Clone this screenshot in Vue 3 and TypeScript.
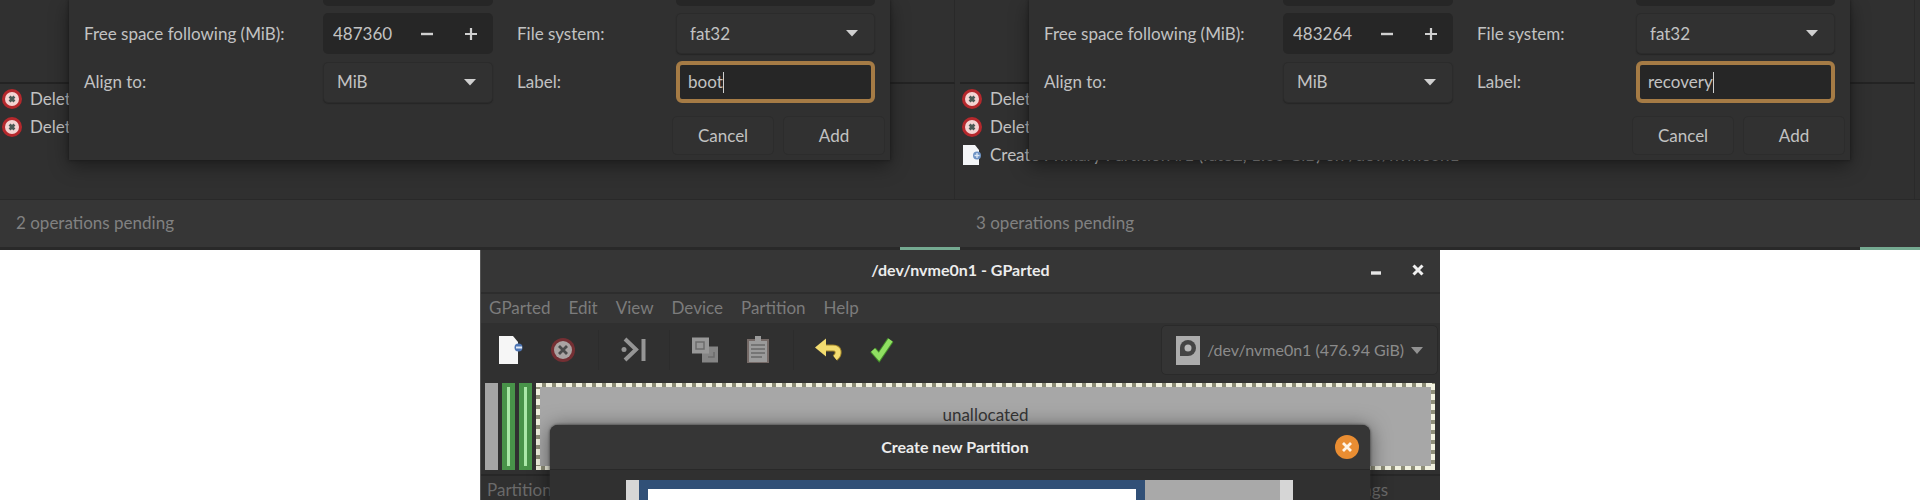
<script setup lang="ts">
interface Operation {
  kind: 'delete' | 'create'
  text: string
}

interface Pane {
  id: string
  free: string
  label: string
  pending: string
  operations: Operation[]
}

const removals: Operation[] = [
  { kind: 'delete', text: 'Delete' },
  { kind: 'delete', text: 'Delete' },
]

const panes: Pane[] = [
  { id: 'boot', free: '487360', label: 'boot', pending: '2 operations pending', operations: removals },
  {
    id: 'recovery',
    free: '483264',
    label: 'recovery',
    pending: '3 operations pending',
    operations: [
      ...removals,
      { kind: 'create', text: 'Create Primary Partition #1 (fat32, 1.00 GiB) on /dev/nvme0n1' },
    ],
  },
]

const menus: string[] = ['GParted', 'Edit', 'View', 'Device', 'Partition', 'Help']
</script>

<template>
  <main class="page">
    <section v-for="pane in panes" :key="pane.id" class="pane">
      <div class="upper"></div>
      <ul class="operations">
        <li v-for="(op, i) in pane.operations" :key="i">
          <svg v-if="op.kind === 'delete'" viewBox="0 0 22 22" width="22" height="22" aria-hidden="true">
            <circle cx="11" cy="11" r="10" fill="#b5282c" />
            <circle cx="11" cy="11" r="7" fill="#f3d4d2" />
            <path d="M8.600 8.600l4.800 4.800m0-4.800l-4.800 4.800" stroke="#4b5a55" stroke-width="2.800" />
          </svg>
          <svg v-else viewBox="0 0 22 22" width="22" height="22" aria-hidden="true">
            <path d="M2 1h12l4 5v15H2z" fill="#f4f6f8" />
            <circle cx="16" cy="11.500" r="4" fill="#6d93c4" />
            <path d="M13.500 11.500h5m-2.500-2.500v5" stroke="#dce8f5" stroke-width="1.300" />
          </svg>
          <span>{{ op.text }}</span>
        </li>
      </ul>
      <footer class="status">{{ pane.pending }}</footer>
      <div class="strip"><i></i></div>

      <form class="dialog options" @submit.prevent>
        <div class="form">
          <i class="cut first"></i>
          <i class="cut second"></i>
          <label :for="pane.id + '-free'">Free space following (MiB):</label>
          <div class="spin">
            <input :id="pane.id + '-free'" type="text" inputmode="numeric" :value="pane.free" />
            <button type="button" aria-label="Decrease">
              <svg viewBox="0 0 14 14" width="14" height="14"><path d="M1 7h12" stroke="#d0d0d0" stroke-width="2.400" /></svg>
            </button>
            <button type="button" aria-label="Increase">
              <svg viewBox="0 0 14 14" width="14" height="14"><path d="M1 7h12M7 1v12" stroke="#d0d0d0" stroke-width="2.200" /></svg>
            </button>
          </div>
          <label :for="pane.id + '-fs'">File system:</label>
          <div class="choice">
            <select :id="pane.id + '-fs'"><option>fat32</option></select>
            <svg viewBox="0 0 14 8" width="12" height="7"><path d="M0 0h14L7 7.500z" fill="#d0d0d0" /></svg>
          </div>
          <label :for="pane.id + '-align'">Align to:</label>
          <div class="choice">
            <select :id="pane.id + '-align'"><option>MiB</option></select>
            <svg viewBox="0 0 14 8" width="12" height="7"><path d="M0 0h14L7 7.500z" fill="#d0d0d0" /></svg>
          </div>
          <label :for="pane.id + '-label'">Label:</label>
          <div class="entry">
            <input :id="pane.id + '-label'" type="text" :value="pane.label" />
            <i class="caret"></i>
          </div>
        </div>
        <div class="actions">
          <button type="button">Cancel</button>
          <button type="submit">Add</button>
        </div>
      </form>
    </section>

    <section class="window">
      <header class="titlebar">
        <h1>/dev/nvme0n1 - GParted</h1>
        <div class="controls">
          <button type="button" aria-label="Minimize">
            <svg viewBox="0 0 12 12" width="12" height="12"><path d="M1 9h10" stroke="#e6e6e6" stroke-width="3.400" /></svg>
          </button>
          <button type="button" aria-label="Close">
            <svg viewBox="0 0 12 12" width="12" height="12"><path d="M1.500 1.500l9 9m0-9l-9 9" stroke="#f0f0f0" stroke-width="3" /></svg>
          </button>
        </div>
      </header>
      <nav class="menubar">
        <button v-for="m in menus" :key="m" type="button">{{ m }}</button>
      </nav>
      <div class="toolbar">
        <button type="button" aria-label="New">
          <svg viewBox="0 0 28 30" width="28" height="30">
            <path d="M3 1h14l5 6v22H3z" fill="#f6f6f6" />
            <circle cx="22.500" cy="12.500" r="4" fill="#4f77b5" />
            <path d="M20 12.500h6" stroke="#e4ecf8" stroke-width="2" />
          </svg>
        </button>
        <button type="button" aria-label="Delete">
          <svg viewBox="0 0 28 30" width="28" height="30">
            <circle cx="14" cy="15" r="12" fill="#742f33" />
            <circle cx="14" cy="15" r="9" fill="#aaa4a3" />
            <path d="M10 11l8 8m0-8l-8 8" stroke="#4b4b4b" stroke-width="2.800" />
          </svg>
        </button>
        <i class="sep"></i>
        <button type="button" aria-label="Resize or move">
          <svg viewBox="0 0 28 30" width="28" height="30">
            <path d="M5 4l11 10.500L5 25" fill="none" stroke="#959595" stroke-width="4" />
            <circle cx="4" cy="14.500" r="2.500" fill="#959595" />
            <path d="M23.500 4v22" stroke="#959595" stroke-width="4" />
          </svg>
        </button>
        <i class="sep"></i>
        <button type="button" aria-label="Copy">
          <svg viewBox="0 0 28 30" width="28" height="30">
            <path d="M11 11.500h16v16H11z" fill="#858585" />
            <path d="M1 2.500h17v16H1z" fill="#989898" />
            <path d="M5 7h8v7H5zM17 22h6v-5" fill="none" stroke="#6c6c6c" stroke-width="1.500" />
          </svg>
        </button>
        <button type="button" aria-label="Paste">
          <svg viewBox="0 0 28 30" width="28" height="30">
            <path d="M3 4h22v24H3z" fill="#756a67" />
            <path d="M5 6h18v21H5zM11 1h6v5h-6z" fill="#9b9b9b" />
            <path d="M7 10h14M7 14h14M7 18h14M7 22h11" stroke="#696969" stroke-width="1.500" />
          </svg>
        </button>
        <i class="sep"></i>
        <button type="button" aria-label="Undo">
          <svg viewBox="0 0 28 30" width="28" height="30">
            <path d="M9 13h9c6 0 7 6 2 10" fill="none" stroke="#a08428" stroke-width="7" />
            <path d="M0 12.500L11 3.500v18z" fill="#f3dc70" />
            <path d="M9 13h9c6 0 7 6 2 10" fill="none" stroke="#f3dc70" stroke-width="5" />
          </svg>
        </button>
        <button type="button" aria-label="Apply">
          <svg viewBox="0 0 28 30" width="28" height="30">
            <path d="M5 15l6 7L22.500 5" fill="none" stroke="#438e29" stroke-width="7" />
            <path d="M5 15l6 7L22.500 5" fill="none" stroke="#90df62" stroke-width="5" />
          </svg>
        </button>
        <button type="button" class="device">
          <svg viewBox="0 0 24 29" width="24" height="29">
            <path d="M0 0h24v29H0z" fill="#acacac" />
            <circle cx="12" cy="12" r="8" fill="#454545" />
            <path d="M4 12h8v8H4z" fill="#454545" />
            <circle cx="12" cy="12" r="3.500" fill="#b8b8b8" />
          </svg>
          <span>/dev/nvme0n1 (476.94 GiB)</span>
          <svg viewBox="0 0 12 7" width="12" height="7"><path d="M0 0h12L6 7z" fill="#929292" /></svg>
        </button>
      </div>
      <div class="disk">
        <i class="used"></i>
        <i class="ext"></i>
        <i class="ext"></i>
        <div class="free">
          <span>unallocated</span>
          <svg class="outline" width="100%" height="100%" aria-hidden="true">
            <rect x="0" y="0" width="100%" height="100%" fill="none" stroke="#8e8e78" stroke-width="8" />
            <rect x="0" y="0" width="100%" height="100%" fill="none" stroke="#f1f1df" stroke-width="8" stroke-dasharray="6 4" />
          </svg>
        </div>
      </div>
      <div class="columns"><span>Partition</span><span>Flags</span></div>

      <div class="dialog create">
        <header>
          <h2>Create new Partition</h2>
          <button type="button" aria-label="Close dialog">
            <svg viewBox="0 0 26 26" width="26" height="26">
              <circle cx="13" cy="13" r="12" fill="#e98d32" />
              <path d="M9 9l8 8m0-8l-8 8" stroke="#fff4e6" stroke-width="2.800" />
            </svg>
          </button>
        </header>
        <div class="resizer">
          <i class="edge"></i>
          <i class="block"></i>
          <i class="rest"></i>
          <i class="edge"></i>
        </div>
      </div>
    </section>
  </main>
</template>

<style>
body {
  margin: 0;
  background: #fff;
}
</style>

<style scoped>
* {
  box-sizing: border-box;
}
.page {
  display: grid;
  grid-template-columns: repeat(4, minmax(0, 1fr));
  grid-template-rows: auto minmax(0, 1fr);
  height: 100vh;
  overflow: hidden;
  font-family: Lato, "Liberation Sans", sans-serif;
  font-size: 17px;
  line-height: 24px;
  color: #c2c2c2;
}
button,
input,
select {
  margin: 0;
  padding: 0;
  border: 0;
  outline: 0;
  background: none;
  color: inherit;
  font: inherit;
}
svg {
  display: block;
  flex: none;
}
.pane {
  position: relative;
  grid-column: span 2;
  overflow: hidden;
  background: #303030;
}
.upper {
  height: 84px;
  margin-right: 5px;
  border-right: 1px solid #292929;
  border-bottom: 2px solid #232323;
}
.operations {
  height: 115px;
  margin: 0 5px 0 0;
  padding: 1px 0 0 1px;
  border-right: 1px solid #2a2a2a;
  list-style: none;
}
.operations li {
  display: flex;
  align-items: center;
  gap: 7px;
  height: 28px;
  white-space: nowrap;
}
.status {
  height: 48px;
  padding: 11px 16px;
  border-top: 1px solid #292929;
  background: #363636;
  color: #818181;
}
.strip {
  display: flex;
  justify-content: flex-end;
  height: 3px;
  background: #292929;
}
.strip i {
  width: 60px;
  background: #75aa91;
}
.dialog {
  position: absolute;
  left: 69px;
  right: 70px;
  background: #303030;
  box-shadow: 0 0 3px #181818, 0 6px 18px rgba(0, 0, 0, 0.4);
}
.options {
  top: 0;
  padding: 0 5px 5px 15px;
}
.form {
  display: grid;
  grid-template-columns: 215px minmax(0, 170fr) 135px minmax(0, 199fr);
  gap: 7px 24px;
  align-items: center;
  padding-right: 10px;
}
.cut {
  height: 6px;
  border-radius: 0 0 5px 5px;
  background: #262626;
}
.first {
  grid-column: 2;
}
.second {
  grid-column: 4;
}
label {
  white-space: nowrap;
}
.spin {
  display: flex;
  height: 41px;
  border-radius: 5px;
  background: #262626;
}
.spin input {
  flex: 1;
  min-width: 0;
  padding-left: 10px;
}
.spin button {
  display: grid;
  place-items: center;
  width: 44px;
}
.choice {
  display: grid;
  align-items: center;
  height: 41px;
  border: 1px solid #2b2b2b;
  border-radius: 5px;
  background: #313131;
  box-shadow: 0 1px 1px #262626;
}
.choice select,
.choice svg {
  grid-area: 1 / 1;
}
.choice select {
  appearance: none;
  height: 100%;
  padding-left: 13px;
}
.choice svg {
  justify-self: end;
  margin-right: 16px;
  pointer-events: none;
}
.entry {
  display: flex;
  align-items: center;
  height: 42px;
  padding-left: 8px;
  border: 4px solid #a57b45;
  border-radius: 6px;
  background: #262626;
}
.entry input {
  field-sizing: content;
}
.caret {
  width: 1px;
  height: 21px;
  background: #d0d0d0;
}
.actions {
  display: flex;
  justify-content: flex-end;
  gap: 9px;
  padding-top: 13px;
}
.actions button {
  width: 102px;
  height: 39px;
  border: 1px solid #2c2c2c;
  border-radius: 5px;
  background: #313131;
}
.window {
  position: relative;
  grid-column: 2 / span 2;
  overflow: hidden;
  border-left: 1px solid #555;
  background: #303030;
}
.titlebar {
  display: grid;
  grid-template-columns: 1fr auto 1fr;
  align-items: center;
  height: 44px;
  padding-bottom: 3px;
  border-bottom: 2px solid #2d2d2d;
  background: #363636;
}
.titlebar h1,
.create h2 {
  grid-column: 2;
  margin: 0;
  color: #ececec;
  font-size: 16px;
  font-weight: 700;
}
.controls {
  display: flex;
  justify-content: flex-end;
  gap: 30px;
  padding-right: 16px;
}
.menubar {
  display: flex;
  gap: 18px;
  height: 29px;
  padding-left: 8px;
  background: #363636;
  color: #7c7c7c;
}
.menubar button {
  height: 28px;
}
.toolbar {
  display: flex;
  align-items: center;
  gap: 25px;
  height: 60px;
  padding: 2px 2px 8px 15px;
}
.sep {
  width: 1px;
  height: 40px;
  margin: 0 -4px;
  background: #2c2c2c;
}
.device {
  display: flex;
  align-items: center;
  gap: 7px;
  height: 50px;
  margin-left: auto;
  padding: 0 14px;
  border: 1px solid #2a2a2a;
  border-radius: 5px;
  background: #343434;
  color: #8b8b8b;
  font-size: 16px;
}
.disk {
  display: flex;
  gap: 4px;
  height: 87px;
  padding: 0 5px 0 4px;
}
.used {
  width: 13px;
  background: #a5a5a5;
}
.ext {
  width: 13px;
  border: solid #489349;
  border-width: 4px 5px;
  background: #aae8a8;
}
.free {
  display: grid;
  flex: 1;
  justify-items: center;
  overflow: hidden;
  background: #a7a7a7;
  color: #363636;
}
.free span,
.outline {
  grid-area: 1 / 1;
}
.free span {
  padding-top: 20px;
}
.columns {
  display: flex;
  justify-content: space-between;
  margin-top: 4px;
  padding: 2px 52px 0 6px;
  border-top: 2px solid #272727;
  color: #6a6a6a;
}
.create {
  top: 175px;
  border-radius: 8px 8px 0 0;
  box-shadow: 0 0 3px #303030, 0 2px 20px rgba(0, 0, 0, 0.5);
}
.create header {
  display: grid;
  grid-template-columns: 1fr auto 1fr;
  align-items: center;
  height: 45px;
  padding-right: 10px;
  border-bottom: 1px solid #292929;
  border-radius: 8px 8px 0 0;
  background: #363636;
}
.create header button {
  grid-column: 3;
  justify-self: end;
}
.resizer {
  display: grid;
  grid-template-columns: 13px minmax(0, 505fr) minmax(0, 135fr) 13px;
  height: 60px;
  margin: 10px 77px 0 76px;
}
.edge {
  background: #d6d6d6;
}
.block {
  border: 9px solid #315077;
  background: #fff;
}
.rest {
  background: #a9a9a9;
}
</style>
